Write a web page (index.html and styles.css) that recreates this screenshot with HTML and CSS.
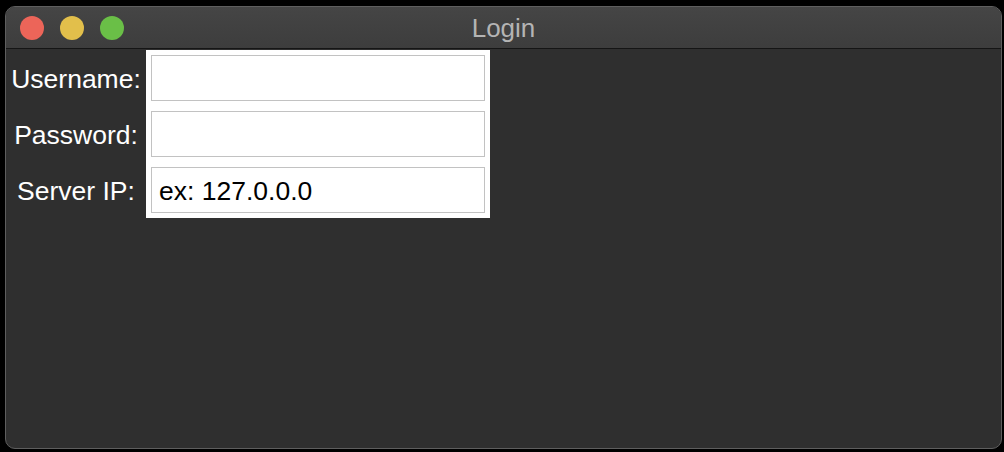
FILE: index.html
```html
<!DOCTYPE html>
<html>
<head>
<meta charset="utf-8">
<link rel="stylesheet" href="styles.css">
</head>
<body>
<div class="window">
  <div class="titlebar">
    <div class="lights">
      <span class="light red"></span>
      <span class="light yellow"></span>
      <span class="light green"></span>
    </div>
    <div class="title">Login</div>
  </div>
  <div class="content">
    <div class="labels">
      <div class="label">Username:</div>
      <div class="label">Password:</div>
      <div class="label">Server IP:</div>
    </div>
    <div class="panel">
      <div class="field"></div>
      <div class="field"></div>
      <div class="field">ex: 127.0.0.0</div>
    </div>
  </div>
</div>
</body>
</html>
```
FILE: styles.css
```css
html, body {
  margin: 0;
  padding: 0;
  background: #000;
  width: 1004px;
  height: 452px;
  overflow: hidden;
  font-family: "Liberation Sans", Arial, sans-serif;
}
.window {
  margin: 6px 0 0 5px;
  width: 997px;
  height: 443px;
  box-sizing: border-box;
  border: 1px solid #5e5e5e;
  border-radius: 10px;
  overflow: hidden;
  background: #2f2f2f;
  display: flex;
  flex-direction: column;
}
.titlebar {
  height: 41px;
  flex: none;
  border-bottom: 1px solid #151515;
  background: linear-gradient(#454545, #3d3d3d);
  display: flex;
  align-items: center;
  position: relative;
}
.lights {
  display: flex;
  gap: 16px;
  margin-left: 14px;
  margin-top: 1px;
}
.light {
  width: 24px;
  height: 24px;
  border-radius: 50%;
  display: block;
}
.red { background: #ec6559; }
.yellow { background: #e2bf4b; }
.green { background: #6abf47; }
.title {
  position: absolute;
  left: 0;
  right: 0;
  top: 0;
  bottom: 0;
  display: flex;
  align-items: center;
  justify-content: center;
  color: #b4b4b4;
  font-size: 26px;
  padding-top: 2px;
}
.content {
  display: flex;
  align-items: flex-start;
  padding-top: 1px;
}
.labels {
  width: 140px;
  padding-top: 6px;
  display: flex;
  flex-direction: column;
  gap: 10px;
}
.label {
  height: 46px;
  line-height: 46px;
  text-align: center;
  color: #fff;
  font-size: 26.5px;
}
.panel {
  background: #fff;
  padding: 5px;
  display: flex;
  flex-direction: column;
  gap: 10px;
}
.field {
  width: 334px;
  height: 46px;
  box-sizing: border-box;
  border: 1px solid #c2c2c2;
  padding-left: 7px;
  padding-top: 1px;
  line-height: 44px;
  font-size: 26.5px;
  color: #000;
}
```
